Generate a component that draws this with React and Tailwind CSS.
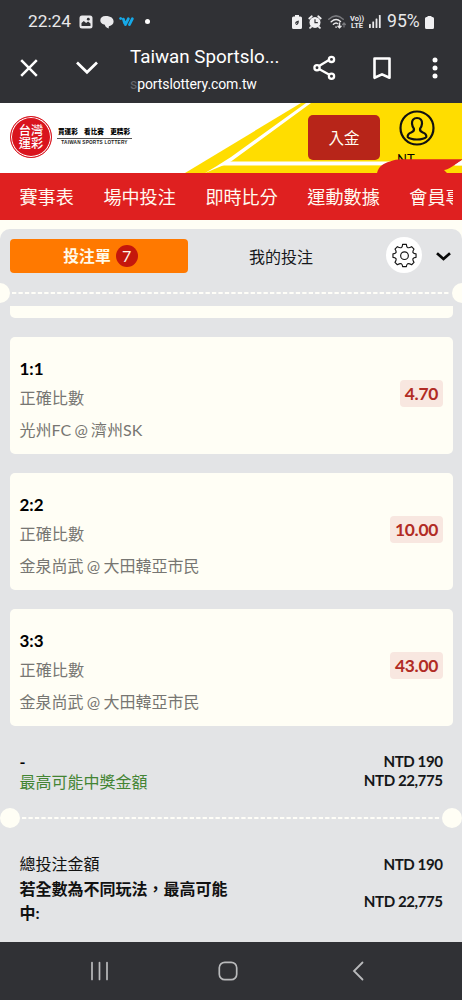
import React from "react";

const cjk = "font-['Lato','Noto_Sans_CJK_TC',sans-serif]";

function StatusBar() {
  return (
    <div className="flex h-[43px] items-center pl-[28px] pr-[28px] text-[#e9e9eb]">
      <span className="w-[45px] whitespace-nowrap pt-px text-[17.3px] leading-none">22:24</span>
      <svg className="ml-[6px] size-[14px]" viewBox="0 0 14 14">
        <rect x="0.5" y="0.5" width="13" height="13" rx="2.5" fill="#e9e9eb" />
        <path d="M2.5 11V8l2.3-2 2.3 2 2-1.5 2.4 2V11z" fill="#303135" />
        <circle cx="9.3" cy="4.2" r="1.4" fill="#303135" />
      </svg>
      <svg className="ml-[7px] size-[14px]" viewBox="0 0 14 14" fill="#e9e9eb">
        <path d="M5.5 1C2.3 1 .3 2.8.3 5.2c0 1.7.9 3 2.3 3.7l2.2.9c.5 2.200 2.200 3 4.200 3.700-.4-.9-.4-1.800 0-2.300 2.800-.4 4.600-2.100 4.600-4.600C13.600 3.300 11 1 5.500 1z" />
      </svg>
      <svg className="ml-[5px] h-[11px] w-[15px]" viewBox="0 0 15 11" stroke="#16a9e8" strokeLinecap="round" strokeWidth="2.800" fill="none">
        <path d="M1.600 2.500l.1.100M4.400 3.200l1.200 4M6.500 8.500l2.800-5.700M10.500 8.500l2.800-5.700" />
      </svg>
      <span className="ml-[11px] size-[5px] rounded-full bg-white" />
      <div className="ml-auto flex items-center">
        <svg className="h-[14px] w-[10px]" viewBox="0 0 10 14">
          <path d="M3 0h4v1.500h1.500Q10 1.500 10 3v9.500Q10 14 8.500 14h-7Q0 14 0 12.500V3Q0 1.500 1.500 1.500H3z" fill="#f0f0f2" />
          <path d="M3.200 8q0-1.800 3.600-2.500.3 3.800-2.300 4.500Q3.200 9.800 3.200 8z" fill="#303135" />
          <path d="M2.500 10.800q.8-2 2.800-3" stroke="#f0f0f2" strokeWidth=".7" fill="none" />
        </svg>
        <svg className="ml-[6px] h-[14px] w-[14px]" viewBox="0 0 14 14">
          <circle cx="7" cy="7.400" r="5.500" fill="#f0f0f2" />
          <path d="M1.300 3.500L3.800 1.300M12.700 3.500L10.200 1.300M3 12l-.9.900M11 12l.9.900" stroke="#f0f0f2" strokeWidth="1.800" strokeLinecap="round" />
          <path d="M7 4.300v3.400h2.800" stroke="#303135" strokeWidth="1.200" fill="none" />
        </svg>
        <svg className="ml-[6px] h-[14px] w-[19px]" viewBox="0 0 19 14" fill="none" strokeLinecap="round" strokeWidth="1.500">
          <path d="M.8 4.300Q8 -2.500 15.200 4.300" stroke="#77787c" />
          <path d="M3.200 6.800Q8 2.500 12.500 6.500M5.400 9.300Q7.700 7.200 9.500 8.500" stroke="#e9e9eb" />
          <path d="M8 12l.1.100M11.500 8v4.500M10 11.200l1.500 1.500 1.500-1.500" stroke="#e9e9eb" />
          <path d="M16 12V8.300M14.600 9.500L16 8l1.400 1.500" stroke="#77787c" strokeWidth="1.200" />
        </svg>
        <div className="ml-[3px] w-[14px] whitespace-nowrap text-center text-[7.500px] font-bold leading-[7px] tracking-[-0.1px]">
          <div>Vo))</div>
          <div>LTE</div>
        </div>
        <svg className="ml-[5px] h-[13px] w-[12px]" viewBox="0 0 12 13" fill="#e9e9eb">
          <rect x="0" y="9" width="1.800" height="4" rx=".5" />
          <rect x="3.300" y="6.500" width="1.800" height="6.500" rx=".5" />
          <rect x="6.600" y="3.500" width="1.800" height="9.500" rx=".5" />
          <rect x="9.900" y="0" width="1.800" height="13" rx=".5" />
        </svg>
        <span className="ml-[6px] w-[36px] whitespace-nowrap pt-px text-[17.600px] leading-none">95%</span>
        <svg className="ml-[2px] mt-[2px] h-[13px] w-[9px]" viewBox="0 0 9 13" fill="#f0f0f2">
          <path d="M2.500 0h4v1h1Q9 1 9 2.500v9Q9 13 7.500 13h-6Q0 13 0 11.500v-9Q0 1 1.500 1h1z" />
        </svg>
      </div>
    </div>
  );
}

function BrowserBar() {
  return (
    <div className="flex h-[60px] items-start text-white">
      <svg className="ml-[20px] mt-[16px] size-[18px]" viewBox="0 0 18 18" stroke="white" strokeWidth="2.500" fill="none">
        <path d="M1.200 1.200l15.600 15.600M16.800 1.200l-15.600 15.600" />
      </svg>
      <svg className="ml-[37px] mt-[18px] h-[14px] w-[24px]" viewBox="0 0 24 14" stroke="white" strokeWidth="2.700" fill="none">
        <path d="M2 1.500l10 9.800L22 1.500" />
      </svg>
      <div className="ml-[31px] w-[150px] whitespace-nowrap">
        <div className="mt-[2px] text-[18.800px] leading-[24px]">Taiwan Sportslo...</div>
        <div className="mt-[5px] text-[14px] leading-[20px] tracking-[-0.100px]">
          <span className="text-[#66676b]">s</span>portslottery.com.tw
        </div>
      </div>
      <svg className="ml-[33px] mt-[12px] h-[25px] w-[23px]" viewBox="0 0 23 25" stroke="white" strokeWidth="2.300" fill="none">
        <path d="M6 11l10-6M6 14l10 5.500" />
        <circle cx="4" cy="12.800" r="2.600" />
        <circle cx="18.500" cy="4.400" r="2.600" />
        <circle cx="18.500" cy="21.200" r="2.600" />
      </svg>
      <svg className="ml-[37px] mt-[14px] h-[23px] w-[18px]" viewBox="0 0 18 23" stroke="white" strokeWidth="2.600" strokeLinejoin="round" fill="none">
        <path d="M1.500 1.500h15v19.300L9 17.400 1.500 20.800z" />
      </svg>
      <svg className="ml-[41px] mt-[14px] h-[22px] w-[6px]" viewBox="0 0 6 22" fill="white">
        <circle cx="3" cy="3" r="2.500" />
        <circle cx="3" cy="11" r="2.500" />
        <circle cx="3" cy="19" r="2.500" />
      </svg>
    </div>
  );
}

function Banner() {
  return (
    <header className="relative flex h-[70px] items-start overflow-hidden bg-white">
      <svg className="absolute inset-0 h-[70px] w-[462px]" viewBox="0 0 462 70">
        <path d="M185 70L301 0H462V70z" fill="#ffdd00" />
        <path d="M205 70L216 63.500L231 54L306 0h5L231 58.500L224 62z" fill="#fff" />
        <path d="M218 62.500L228 58.500H462V62.300z" fill="#fff" />
      </svg>
      <div className="relative ml-[10px] mt-[13px] flex size-[42px] items-center justify-center rounded-full border border-[#d9141e] bg-[#d9141e] text-white shadow-[inset_0_0_0_1px_#fff]">
        <div className="flex flex-col items-center font-['Noto_Sans_CJK_TC',sans-serif] text-[12.200px] font-medium leading-[12.500px]">
          <span className="h-[13px] whitespace-nowrap">台灣</span>
          <span className="h-[13px] whitespace-nowrap">運彩</span>
        </div>
      </div>
      <div className="relative ml-[5px] mt-[23px] w-[75px] whitespace-nowrap text-black">
        <div className="flex justify-between border-b border-[#555] pb-[2px] pl-px pr-[2px] font-['Noto_Sans_CJK_TC',sans-serif] text-[6.600px] font-black leading-[10px]">
          <span>買運彩</span>
          <span>看比賽</span>
          <span>更精彩</span>
        </div>
        <div className="mt-[1px] text-center font-['Liberation_Sans',sans-serif] text-[4.700px] font-bold leading-[6px] tracking-[0.220px] text-[#222]">
          TAIWAN SPORTS LOTTERY
        </div>
      </div>
      <button className={`relative ml-[176px] mt-[12px] h-[45px] w-[72px] rounded-[5px] bg-[#b72519] text-[15.500px] leading-[47px] text-[#fffdf3] ${cjk}`}>
        入金
      </button>
      <div className="relative ml-[19px] mt-[7px] flex w-[36px] flex-col">
        <svg className="size-[36px]" viewBox="0 0 36 36" fill="none" stroke="#111" strokeWidth="2.200">
          <circle cx="18" cy="18" r="16.500" />
          <path d="M18 8c-3.600 0-5.300 2.500-5 5.600.2 2.300.8 3.600 1.900 5 .6 2.500-.7 3.200-2.700 3.900-2.600.9-3.700 2.300-3.500 4.500 3.200 3.300 15.400 3.300 18.600 0 .2-2.200-.9-3.600-3.500-4.500-2-.7-3.300-1.400-2.700-3.900 1.100-1.400 1.700-2.700 1.900-5C23.300 10.500 21.600 8 18 8z" strokeLinejoin="round" />
        </svg>
        <div className={`-ml-[2px] mt-[5px] h-[12px] whitespace-nowrap text-[13px] leading-[16px] text-black ${cjk}`}>NT</div>
      </div>
      <svg className="absolute right-0 bottom-0 h-[14px] w-[86px]" viewBox="0 0 86 14">
        <path d="M1 14C3 7 7 4.500 14 2.500C18 1 21 .3 26 .3H86V1L77 7C73 9.800 70 11 68 11L71 14z" fill="#df2020" />
        <path d="M78.500 6.500L86 1V6.500z" fill="#fff" />
      </svg>
    </header>
  );
}

function MainNav() {
  const items = ["賽事表", "場中投注", "即時比分", "運動數據", "會員專區"];
  return (
    <nav className="h-[47px] bg-[#df2020] pl-[19.500px] pr-[9px]">
      <div className={`flex h-[47px] gap-[29.600px] overflow-hidden whitespace-nowrap text-[18.100px] leading-[49px] text-[#fffaf0] ${cjk}`}>
        {items.map((t) => (
          <a key={t} className="shrink-0">{t}</a>
        ))}
      </div>
    </nav>
  );
}

function SlipTabs() {
  return (
    <div className="flex h-[54px] items-start pl-[10px] pt-[10px]">
      <button className="flex h-[34px] w-[178px] items-center justify-center gap-[5px] rounded-[4px] bg-[#ff7900] pl-[3px] text-[#fff9e8]">
        <span className="text-[15.800px] font-bold leading-[36px]">投注單</span>
        <span className="mt-[-1px] flex size-[22px] items-center justify-center rounded-full bg-[#c4170c] text-[16px] leading-none">7</span>
      </button>
      <button className="ml-[61px] h-[34px] text-[16px] leading-[35px] text-[#16181b]">我的投注</button>
      <button className="ml-[73px] mt-[-2px] flex size-[36px] items-center justify-center rounded-full bg-white">
        <svg className="size-[25px]" viewBox="0 0 26 26" fill="none" stroke="#151515" strokeWidth="1.200" strokeLinejoin="round">
          <path d="M11 1.500h4q.1 2.500 1.200 3.200 1.300.7 4.200-.9l2.500 2.500q-1.700 2.600-1 3.800.8 1.100 3.100 1.200v3.600q-2.300.2-3.100 1.300-.7 1.300 1 3.900l-2.500 2.500q-2.900-1.600-4.200-.9-1.100.8-1.200 2.800h-4q-.1-2-1.200-2.800-1.300-.7-4.200.9l-2.500-2.500q1.700-2.600 1-3.900Q3.300 15.100 1 14.900v-3.600q2.300-.1 3.100-1.200.7-1.200-1-3.800l2.500-2.500q2.900 1.600 4.200.9Q10.900 4 11 1.500z" />
          <circle cx="13" cy="13.200" r="4" />
        </svg>
      </button>
      <svg className="ml-[14px] mt-[13px] h-[9px] w-[15px]" viewBox="0 0 15 9" fill="none" stroke="#090909" strokeWidth="2.700">
        <path d="M1 1.200l6.500 5.800L14 1.200" />
      </svg>
    </div>
  );
}

function Perforation({ className = "", inset }) {
  return (
    <div className={`flex h-[20px] items-center ${className}`}>
      <span className={`-mt-px size-[20px] shrink-0 rounded-full bg-[#fffef5] ${inset ? "" : "-ml-[10px]"}`} />
      <svg className="mx-[2px] h-[2px] min-w-0 flex-1">
        <line x1="0" y1="1" x2="100%" y2="1" stroke="#fffef8" strokeWidth="2" strokeDasharray="4.300 2.150" />
      </svg>
      <span className={`-mt-px size-[20px] shrink-0 rounded-full bg-[#fffef5] ${inset ? "" : "-mr-[10px]"}`} />
    </div>
  );
}

function BetCard({ score, match, odds }) {
  return (
    <article className="flex h-[117px] items-start justify-between rounded-[5px] bg-[#fffef5] px-[10px]">
      <div className="pt-[19px]">
        <div className="h-[24px] text-[17px] font-bold leading-[25px] text-black">{score}</div>
        <div className="mt-[5px] h-[24px] text-[16.200px] leading-[25px] text-[#777672]">正確比數</div>
        <div className="mt-[8px] h-[24px] whitespace-nowrap text-[16px] leading-[25px] text-[#777672] [word-spacing:-0.800px]">{match}</div>
      </div>
      <div className="mt-[43px] h-[27px] rounded-[4px] bg-[#f8e7e0] px-[5px] text-[17.400px] font-bold leading-[27px] tracking-[-0.300px] text-[#b12b24]">{odds}</div>
    </article>
  );
}

function Amount({ children }) {
  return <span className="text-right text-[15.100px] font-bold tracking-[-0.450px] text-[#151719]">{children}</span>;
}

function BetSlip() {
  const bets = [
    { score: "1:1", match: "光州FC @ 濟州SK", odds: "4.70" },
    { score: "2:2", match: "金泉尚武 @ 大田韓亞市民", odds: "10.00" },
    { score: "3:3", match: "金泉尚武 @ 大田韓亞市民", odds: "43.00" },
  ];
  return (
    <main className={`h-[722px] bg-[#fffef5] pt-[9px] ${cjk}`}>
      <section className="h-[713px] overflow-hidden rounded-t-[10px] bg-[#e3e4e6]">
        <SlipTabs />
        <Perforation />
        <div className="ml-[9.500px] mr-[9px] mt-[3px] h-[12px] rounded-b-[5px] bg-[#fffef5]" />
        <div className="ml-[9.500px] mr-[9px] mt-[19px] flex flex-col gap-[19.200px]">
          {bets.map((b, i) => (
            <BetCard key={i} {...b} />
          ))}
        </div>
        <div className="mt-[26px] flex h-[42px] justify-between pl-[19.500px] pr-[19.500px] text-[16px]">
          <div className="leading-[19px]">
            <div className="h-[19px] font-bold text-black">-</div>
            <div className="leading-[21px] text-[#438434]">最高可能中獎金額</div>
          </div>
          <div className="flex flex-col leading-[19px]">
            <Amount>NTD 190</Amount>
            <Amount>NTD 22,775</Amount>
          </div>
        </div>
        <Perforation className="mt-[14px]" inset />
        <div className="mt-[23px] pl-[19.500px] pr-[19.500px] text-[16px] text-[#111]">
          <div className="flex h-[25px] items-center justify-between">
            <span>總投注金額</span>
            <Amount>NTD 190</Amount>
          </div>
          <div className="flex h-[49px] items-center justify-between">
            <span className="w-[216px] font-bold leading-[24px]">若全數為不同玩法，最高可能中:</span>
            <Amount>NTD 22,775</Amount>
          </div>
        </div>
      </section>
    </main>
  );
}

function SystemNav() {
  return (
    <div className="flex h-[58px] items-start bg-[#303135] pt-[19px]">
      <svg className="ml-[90px] h-[20px] w-[19px]" viewBox="0 0 19 20" stroke="#b9babc" strokeWidth="1.700" strokeLinecap="round">
        <path d="M2 1.500v17M9.500 1.500v17M17 1.500v17" />
      </svg>
      <svg className="ml-[109px] size-[20px]" viewBox="0 0 20 20" fill="none" stroke="#b9babc" strokeWidth="1.700">
        <rect x="1.300" y="1.300" width="17.400" height="17.400" rx="5.500" />
      </svg>
      <svg className="ml-[114px] h-[20px] w-[12px]" viewBox="0 0 12 20" fill="none" stroke="#b9babc" strokeWidth="1.800" strokeLinecap="round">
        <path d="M10.500 1.500L2 10l8.500 8.500" />
      </svg>
    </div>
  );
}

export default function App() {
  return (
    <div className="flex h-[1000px] w-[462px] flex-col overflow-hidden bg-[#303135]">
      <div className="h-[103px] bg-[#303135] font-['Roboto',sans-serif]">
        <StatusBar />
        <BrowserBar />
      </div>
      <Banner />
      <MainNav />
      <BetSlip />
      <SystemNav />
    </div>
  );
}
